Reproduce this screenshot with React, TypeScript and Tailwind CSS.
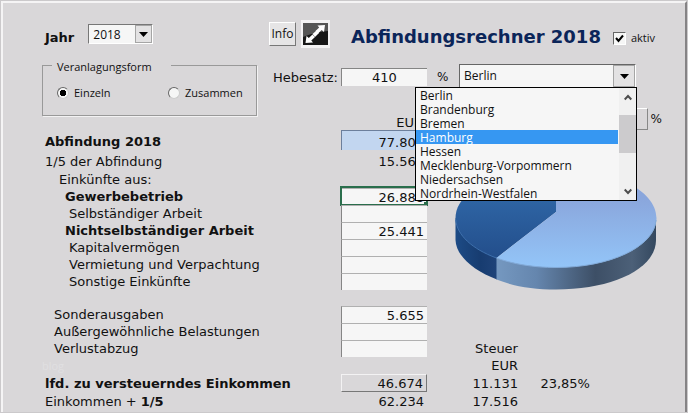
import { useState } from 'react';

const STATES = [
  'Berlin',
  'Brandenburg',
  'Bremen',
  'Hamburg',
  'Hessen',
  'Mecklenburg-Vorpommern',
  'Niedersachsen',
  'Nordrhein-Westfalen',
];

const INCOME = [
  { id: 'gewerbe', label: 'Gewerbebetrieb', value: '26.888', bold: true, active: true },
  { id: 'selbst', label: 'Selbständiger Arbeit', value: '' },
  { id: 'nichtselbst', label: 'Nichtselbständiger Arbeit', value: '25.441', bold: true },
  { id: 'kapital', label: 'Kapitalvermögen', value: '' },
  { id: 'miete', label: 'Vermietung und Verpachtung', value: '' },
  { id: 'sonstige', label: 'Sonstige Einkünfte', value: '' },
];

const FIELD = 'block w-full pr-[3px] text-right outline-none';
const CELL = 'h-[17px] border-l border-t border-l-[#858585] border-t-[#b0b0b0] bg-[#f6f6f6]';

function Triangle() {
  return (
    <svg className="h-[5px] w-[9px]" viewBox="0 0 9 5" aria-hidden>
      <path d="M0 0h9L4.5 5z" fill="#000" />
    </svg>
  );
}

function Chevron({ up = false }: { up?: boolean }) {
  return (
    <svg className="h-[7px] w-2" viewBox="0 0 8 7" fill="none" stroke="#4d4d4d" strokeWidth="2" aria-hidden>
      <path d={up ? 'M.7 5.5L4 2l3.3 3.5' : 'M.7 1.5L4 5l3.3-3.5'} />
    </svg>
  );
}

function StateList({ value, onSelect }: { value: string; onSelect: (state: string) => void }) {
  return (
    <div className="absolute -right-0.5 top-full z-10 flex w-[222px] border border-black bg-[#f6f6f6]">
      <ul role="listbox" aria-label="Bundesland" className="flex-1">
        {STATES.map((state) => (
          <li
            key={state}
            role="option"
            aria-selected={state === value}
            onClick={() => onSelect(state)}
            className={
              state === value
                ? 'h-[14px] bg-[#3697f2] pl-1 leading-[15px] text-white'
                : 'h-[14px] pl-1 leading-[15px]'
            }
          >
            {state}
          </li>
        ))}
      </ul>
      <div className="ml-px flex w-[17px] flex-col bg-[#f0f0f0]">
        <button type="button" aria-label="Nach oben" className="flex h-[18px] items-center justify-center">
          <Chevron up />
        </button>
        <div className="mt-[9px] h-[38px] bg-[#cccbcd]" />
        <button type="button" aria-label="Nach unten" className="mt-auto flex h-[18px] items-center justify-center">
          <Chevron />
        </button>
      </div>
    </div>
  );
}

function TaxPie() {
  return (
    <svg className="ml-auto h-[123px] w-[204px]" viewBox="454 167 204 123" role="img" aria-label="Steueranteil">
      <defs>
        <linearGradient id="lightTop" x1="0" y1="0" x2="0" y2="1">
          <stop offset="0.3" stopColor="#8aa6dc" />
          <stop offset="1" stopColor="#93c5f8" />
        </linearGradient>
        <linearGradient id="darkTop" x1="0" y1="0" x2="0" y2="1">
          <stop offset="0.3" stopColor="#2f66a6" />
          <stop offset="1" stopColor="#234e8b" />
        </linearGradient>
        <linearGradient id="lightSide">
          <stop offset="0" stopColor="#7598c0" />
          <stop offset="0.25" stopColor="#6586ae" />
          <stop offset="0.62" stopColor="#3d4f66" />
          <stop offset="0.85" stopColor="#4c6078" />
          <stop offset="1" stopColor="#34485f" />
        </linearGradient>
        <linearGradient id="darkSide">
          <stop offset="0" stopColor="#1d4b86" />
          <stop offset="0.6" stopColor="#173c70" />
          <stop offset="1" stopColor="#1f4379" />
        </linearGradient>
      </defs>
      <path d="M455.500 218V240C456 256 474 271 497 279.500V257.500z" fill="url(#darkSide)" />
      <path
        d="M496.500 257V279.500C513 286 533 289.500 556 289.500C612 289.500 656 269 656 240V218z"
        fill="url(#lightSide)"
      />
      <path d="M556 212V168C500 168 455.500 190 455.500 218C455.500 234 471 248 496.500 258z" fill="url(#darkTop)" />
      <path
        d="M556 212V168C612 168 656.500 190 656.500 218C656.500 246 612 267.500 556 267.500C533 267.500 513 264 496.500 258z"
        fill="url(#lightTop)"
      />
      <path d="M455.800 220C457 235 472 249 496.500 258" fill="none" stroke="#3e70ad" />
      <path d="M496.500 258C513 264 533 267.500 556 267.500C610 267.500 654 247 656 220" fill="none" stroke="#83abd9" />
    </svg>
  );
}

export default function App() {
  const [state, setState] = useState('Hamburg');
  const [form, setForm] = useState('einzeln');

  return (
    <main className="flex min-h-screen bg-[#cbc9cb] p-px font-['DejaVu_Sans',sans-serif] text-[13px] text-[#111]">
      <div className="flex-1 border-l-2 border-r-2 border-t-2 border-l-[#f5f4f5] border-r-[#858385] border-t-[#f5f4f5] bg-[#d9d7d9] pl-[39px]">
        <header className="flex h-[57px] items-center pr-[30px] pt-[5px]">
          <label htmlFor="jahr" className="pl-[3px] pt-2 font-bold">
            Jahr
          </label>
          <div className="relative ml-[14px] flex h-[20px] w-[65px] border border-b-white border-l-[#777] border-r-white border-t-[#777] bg-[#f6f6f6]">
            <select
              id="jahr"
              className="w-full appearance-none pl-1 font-['Open_Sans',sans-serif] text-[12px] leading-[20px] outline-none"
            >
              <option>2018</option>
            </select>
            <span className="pointer-events-none absolute right-0 top-0 flex h-[18px] w-[17px] items-center justify-center border border-[#a5a5a5] bg-[#e3e2e3]">
              <Triangle />
            </span>
          </div>
          <button
            type="button"
            className="ml-auto h-[24px] w-[27px] border border-b-[#777] border-l-white border-r-[#777] border-t-white bg-[#e6e5e6] font-['Open_Sans',sans-serif] text-[12px] leading-[20px]"
          >
            Info
          </button>
          <button
            type="button"
            aria-label="Ansicht vergrößern"
            className="ml-[5px] border-x-2 border-y-[3px] border-[#f3f2f3]"
          >
            <svg className="h-[22px] w-[25px]" viewBox="0 0 25 22" aria-hidden>
              <rect width="25" height="22" fill="#171717" />
              <path d="M0 0h25v8Q12 9 0 14z" fill="#555" />
              <path
                d="M14.500 2.500L22 2l-1 7-2.300-2.100L15 10.500l-2.500-2.500 3.700-3.400zM10 19.500L2.500 20l1-7 2.300 2.100L9.500 11.500l2.500 2.500-3.700 3.400z"
                fill="#fff"
              />
              <path d="M9.500 11l4-3.500 2.500 2.500-4 4z" fill="#fff" />
            </svg>
          </button>
          <h1 className="ml-[21px] pt-1.5 text-[18px] font-bold leading-6 text-[#0b2559]">Abfindungsrechner 2018</h1>
          <label className="ml-3 flex items-center gap-[5px] pt-2 font-['Open_Sans',sans-serif] text-[11px]">
            <span className="relative flex">
              <input
                type="checkbox"
                defaultChecked
                className="peer h-[13px] w-[13px] appearance-none border border-b-white border-l-[#666] border-r-white border-t-[#666] bg-[#f6f6f6]"
              />
              <svg
                className="pointer-events-none absolute inset-0 hidden h-[13px] w-[13px] peer-checked:block"
                viewBox="0 0 13 13"
                fill="none"
                stroke="#000"
                strokeWidth="2"
                aria-hidden
              >
                <path d="M3 6l2.500 3L10 3.500" />
              </svg>
            </span>
            aktiv
          </label>
        </header>

        <section className="flex items-start pr-[49px]">
          <fieldset className="-mb-[9px] h-[56px] w-[215px] border border-[#999] pl-[14px] font-['Open_Sans',sans-serif] text-[11px] shadow-[1px_1px_0_#f3f2f3]">
            <legend className="-ml-[5px] h-[10px] pl-[5px] pr-[19px] leading-[14px]">Veranlagungsform</legend>
            <div className="grid grid-cols-[111px_1fr] pt-[14px]">
              {['Einzeln', 'Zusammen'].map((name) => (
                <label key={name} className="flex items-center gap-[5px] leading-[18px]">
                  <input
                    type="radio"
                    name="form"
                    checked={form === name.toLowerCase()}
                    onChange={() => setForm(name.toLowerCase())}
                    className="h-3 w-3 shrink-0 appearance-none rounded-full border border-b-[#ccc] border-l-[#666] border-r-[#ccc] border-t-[#666] bg-[#f6f6f6] bg-[radial-gradient(circle,#000_3px,transparent_3px)] not-checked:bg-none"
                  />
                  {name}
                </label>
              ))}
            </div>
          </fieldset>
          <div className="ml-auto flex h-[48px] items-start pt-1">
            <label htmlFor="hebesatz" className="leading-[27px]">
              Hebesatz:
            </label>
            <input
              id="hebesatz"
              defaultValue="410"
              className="ml-[3px] mt-1 h-[18px] w-[86px] border-l border-t border-[#858585] bg-[#f6f6f6] pt-px text-center outline-none"
            />
            <span className="ml-2.5 w-[22px] text-[12px] leading-[27px]">%</span>
            <div className="relative flex h-[24px] w-[177px] border border-b-white border-l-[#666] border-r-white border-t-[#666] bg-[#f6f6f6] font-['Open_Sans',sans-serif] text-[12px]">
              <select aria-label="Bundesland" className="w-full appearance-none pl-1 outline-none">
                <option>Berlin</option>
              </select>
              <span className="pointer-events-none absolute right-0 top-0 flex h-[22px] w-[22px] items-center justify-center border border-[#a5a5a5] bg-[#e3e2e3]">
                <Triangle />
              </span>
              <StateList value={state} onSelect={setState} />
            </div>
          </div>
        </section>

        <table className="w-full table-fixed border-separate border-spacing-0 leading-[16px]">
          <colgroup>
            <col />
            <col className="w-[86px]" />
            <col className="w-[91px]" />
            <col className="w-[72px]" />
            <col className="w-[95px]" />
          </colgroup>
          <thead>
            <tr className="h-[22px]">
              <th />
              <th className="pr-1 text-right align-bottom font-normal leading-[14px]">EUR</th>
              <th colSpan={3} className="font-normal">
                <label className="flex items-center justify-end gap-[3px] pr-[23px] text-[12px]">
                  <input
                    readOnly
                    className="h-[22px] w-[86px] border border-b-[#888] border-l-white border-r-[#888] border-t-white outline-none"
                  />
                  %
                </label>
              </th>
            </tr>
          </thead>
          <tbody>
            <tr className="h-[20px]">
              <td>
                <label htmlFor="abfindung" className="block pl-[3px] pt-1 font-bold">
                  Abfindung 2018
                </label>
              </td>
              <td>
                <input
                  id="abfindung"
                  defaultValue="77.800"
                  className={`${FIELD} h-[20px] border-l border-t border-[#6c7f9c] bg-[#c2d6f0] pt-1`}
                />
              </td>
            </tr>
            <tr className="h-[22px]">
              <td className="pl-[3px] pt-px">1/5 der Abfindung</td>
              <td className="pr-[3px] pt-px text-right">15.560</td>
              <td colSpan={3} rowSpan={8} className="pr-[27px] align-bottom">
                <TaxPie />
              </td>
            </tr>
            <tr className="h-[16px]">
              <td className="pl-[17px]">Einkünfte aus:</td>
              <td />
            </tr>
            {INCOME.map(({ id, label, value, bold, active }) => (
              <tr key={id} className="h-[17px]">
                <td className="pt-px">
                  <label htmlFor={id} className={bold ? 'block pl-[23px] font-bold' : 'block pl-[27px]'}>
                    {label}
                  </label>
                </td>
                <td className="relative">
                  <input id={id} defaultValue={value} className={`${FIELD} ${CELL}`} />
                  {active && (
                    <span className="pointer-events-none absolute -inset-x-px -bottom-px -top-0.5 border-2 border-[#2a6e4c]">
                      <span className="absolute -bottom-0.5 -right-0.5 h-1 w-1 bg-[#2a6e4c]" />
                    </span>
                  )}
                </td>
              </tr>
            ))}
            <tr className="h-[16px]">
              <td colSpan={5} />
            </tr>
            <tr className="h-[17px]">
              <td className="pt-px">
                <label htmlFor="sonder" className="block pl-3">
                  Sonderausgaben
                </label>
              </td>
              <td>
                <input id="sonder" defaultValue="5.655" className={`${FIELD} ${CELL}`} />
              </td>
            </tr>
            <tr className="h-[17px]">
              <td className="pt-px">
                <label htmlFor="belastungen" className="block pl-3">
                  Außergewöhnliche Belastungen
                </label>
              </td>
              <td>
                <input id="belastungen" className={`${FIELD} ${CELL}`} />
              </td>
            </tr>
            <tr className="h-[17px]">
              <td className="pt-px">
                <label htmlFor="verlust" className="block pl-3">
                  Verlustabzug
                </label>
              </td>
              <td>
                <input id="verlust" className={`${FIELD} ${CELL}`} />
              </td>
              <td className="pt-px text-right">Steuer</td>
            </tr>
            <tr className="h-[17px]">
              <td colSpan={2} className="font-['Open_Sans',sans-serif] text-[11px] text-[#e0dfe1]">
                blog
              </td>
              <td className="pt-px text-right">EUR</td>
            </tr>
            <tr className="h-[18px]">
              <td className="pt-0.5">
                <label htmlFor="zve" className="block pl-[3px] font-bold">
                  lfd. zu versteuerndes Einkommen
                </label>
              </td>
              <td>
                <input
                  id="zve"
                  readOnly
                  value="46.674"
                  className={`${FIELD} h-[18px] border border-b-[#777] border-l-[#f3f2f3] border-r-[#777] border-t-[#f3f2f3] pt-px`}
                />
              </td>
              <td className="pt-0.5 text-right">11.131</td>
              <td className="pt-0.5 text-right">23,85%</td>
            </tr>
            <tr className="h-[18px]">
              <td className="pl-[3px] pt-px">
                Einkommen + <b>1/5</b>
              </td>
              <td className="pr-[3px] pt-px text-right">62.234</td>
              <td className="pt-px text-right">17.516</td>
            </tr>
          </tbody>
        </table>
      </div>
    </main>
  );
}
